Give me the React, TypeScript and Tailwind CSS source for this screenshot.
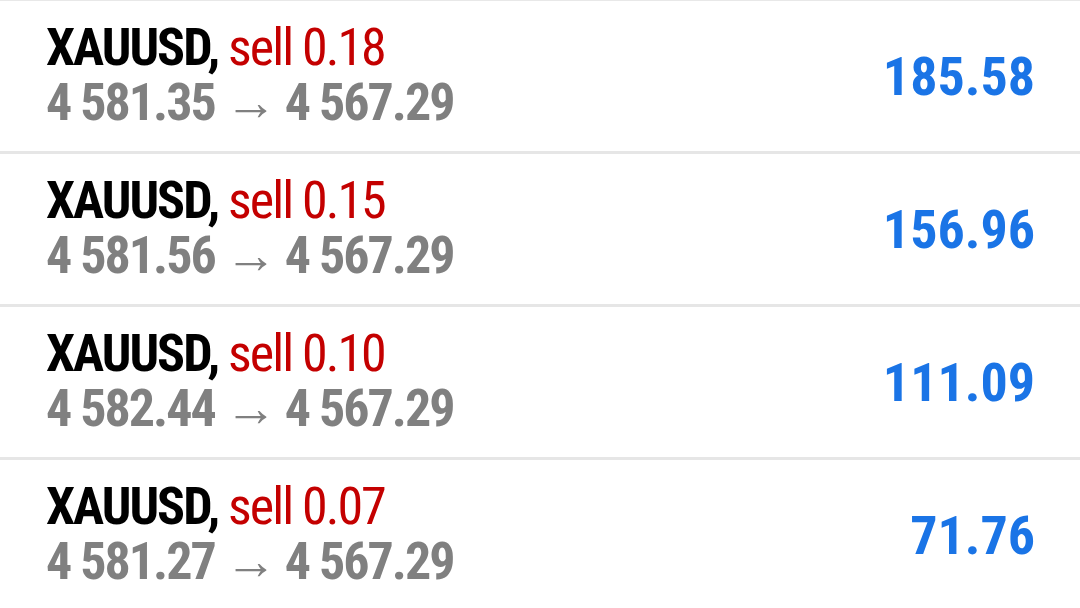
const rows = [
  { symbol: 'XAUUSD', side: 'sell', volume: '0.18', open: '4 581.35', current: '4 567.29', profit: '185.58' },
  { symbol: 'XAUUSD', side: 'sell', volume: '0.15', open: '4 581.56', current: '4 567.29', profit: '156.96' },
  { symbol: 'XAUUSD', side: 'sell', volume: '0.10', open: '4 582.44', current: '4 567.29', profit: '111.09' },
  { symbol: 'XAUUSD', side: 'sell', volume: '0.07', open: '4 581.27', current: '4 567.29', profit: '71.76' },
];

export default function App() {
  return (
    <div
      className="w-[1080px] h-[608px] overflow-hidden bg-white border-t border-[#e8e8e8]"
      style={{ fontFamily: '"Roboto Condensed", Roboto, "Liberation Sans", sans-serif', fontStretch: 'condensed' }}
    >
      {rows.map((r, i) => (
        <div
          key={i}
          className="h-[153px] border-b-[3px] border-[#e6e6e6] flex items-center justify-between pl-[46px] pr-[45px]"
        >
          <div className="text-[52px] leading-[55px] tracking-[-2px] -mt-[2px]">
            <div className="whitespace-nowrap">
              <span className="font-bold text-black">{r.symbol},</span>{' '}
              <span className="text-[#c40000]">
                {r.side} {r.volume}
              </span>
            </div>
            <div className="whitespace-nowrap font-bold text-[#808080]">
              {r.open} <span className="font-normal">→</span> {r.current}
            </div>
          </div>
          <div className="text-[54px] leading-[55px] font-bold text-[#1a74e6]">{r.profit}</div>
        </div>
      ))}
    </div>
  );
}
